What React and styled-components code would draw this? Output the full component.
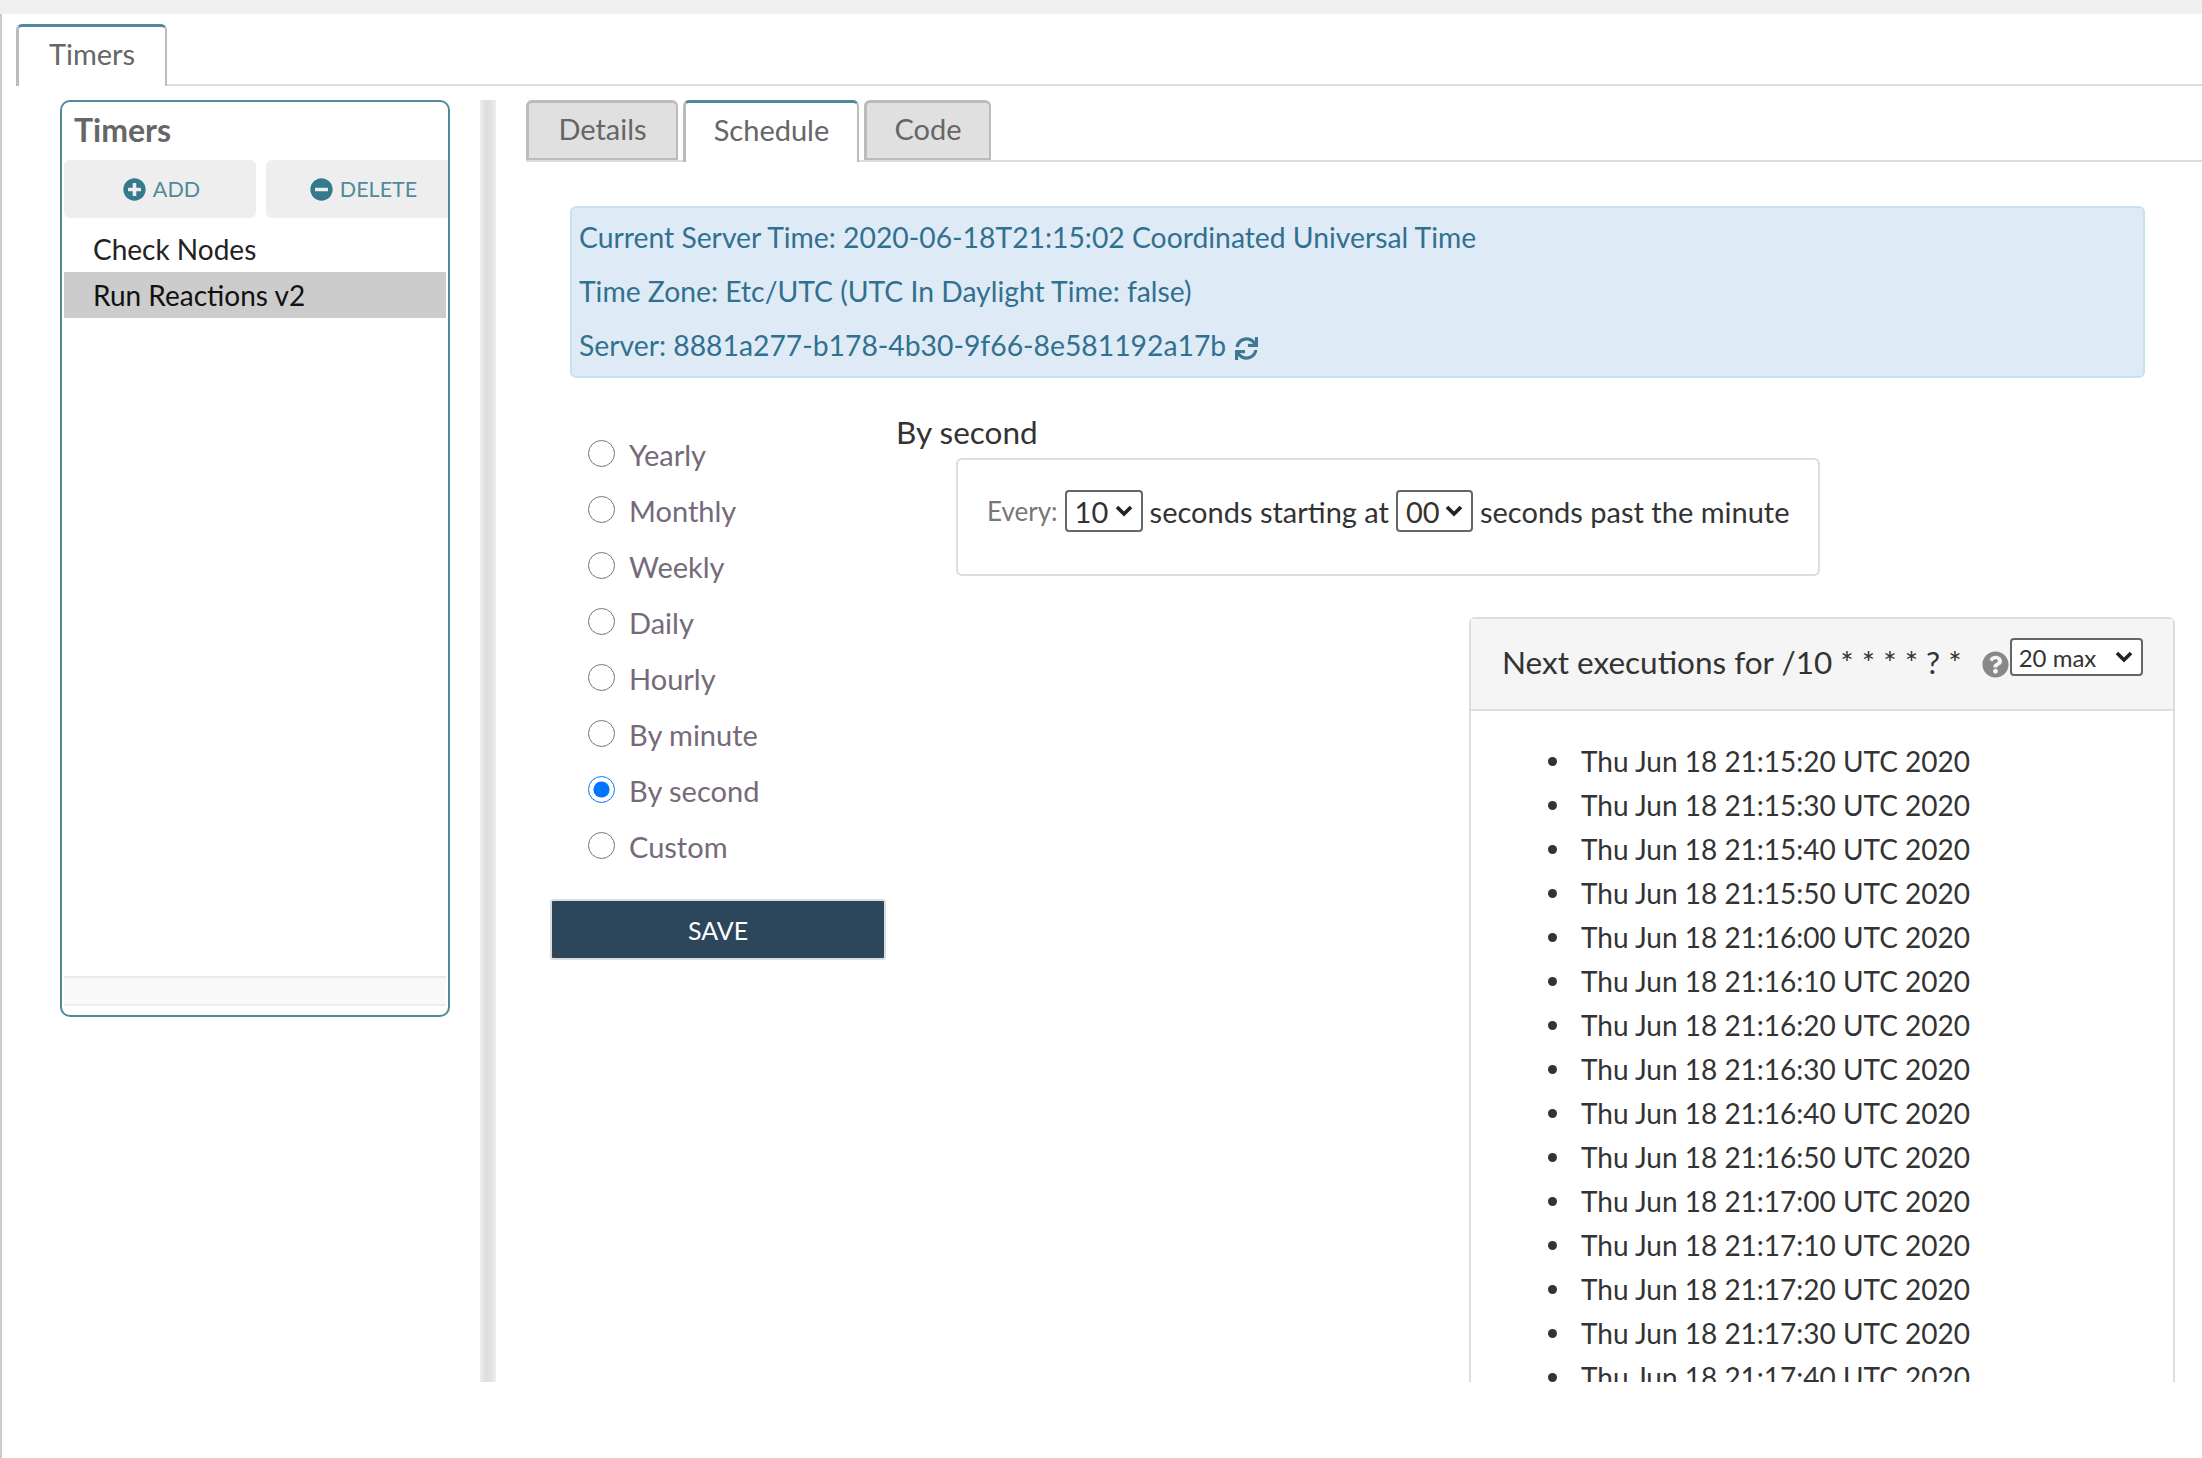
import React from 'react';
import styled, { createGlobalStyle } from 'styled-components';
import { FaPlusCircle, FaMinusCircle, FaQuestionCircle, FaSync } from 'react-icons/fa';

const TEAL = '#4f8a9c';

const CHEVRON = "url(\"data:image/svg+xml,%3Csvg xmlns='http://www.w3.org/2000/svg' viewBox='0 0 20 14'%3E%3Cpath d='M3 3l7 7 7-7' fill='none' stroke='%23222' stroke-width='3.6'/%3E%3C/svg%3E\")";

const GlobalStyle = createGlobalStyle`
  html, body {
    margin: 0;
    height: 100%;
    background: #fff;
    overflow: hidden;
  }
  body, select, button {
    font-family: Lato, "Noto Sans", sans-serif;
  }
  * {
    box-sizing: border-box;
  }
`;

const TopBand = styled.div`
  height: 14px;
  background: #f0f0f0;
`;

const Shell = styled.div`
  height: 1444px;
  padding: 10px 0 0 14px;
  border-left: 2px solid #ccc;
`;

const TabStrip = styled.div`
  display: flex;
  height: 62px;
  border-bottom: 2px solid #ddd;
`;

const Tab = styled.div`
  display: flex;
  align-items: center;
  justify-content: center;
  width: ${p => p.$width}px;
  height: ${p => p.$active ? '62px' : '60px'};
  padding-bottom: ${p => p.$active ? '6px' : '4px'};
  font-size: 29px;
  color: #666;
  background: ${p => p.$active ? '#fff' : '#e0e0e0'};
  border: 3px solid #bbb;
  border-top: 3px solid ${p => p.$active ? TEAL : '#bbb'};
  border-bottom: ${p => p.$active ? '0 none' : '2px solid #bbb'};
  border-right-width: 2px;
  border-radius: 6px 6px 0 0;
`;

const Workspace = styled.div`
  display: flex;
  height: 1296px;
  padding-top: 14px;
  overflow: hidden;
`;

const SidePanel = styled.div`
  display: flex;
  flex-direction: column;
  flex: 0 0 390px;
  min-width: 0;
  height: 917px;
  margin-left: 44px;
  padding: 2px;
  border: 2px solid ${TEAL};
  border-radius: 10px;
  background: #fff;
`;

const SideTitle = styled.div`
  height: 56px;
  padding: 7px 0 0 10px;
  font-size: 32px;
  font-weight: 700;
  line-height: 38px;
  color: #666;
`;

const ActionRow = styled.div`
  display: flex;
  gap: 10px;
  width: 384px;
`;

const ActionButton = styled.div`
  display: flex;
  flex: 0 0 ${p => p.$width}px;
  align-items: center;
  justify-content: center;
  gap: 7px;
  height: 58px;
  padding-left: ${p => p.$shift}px;
  font-size: 21.5px;
  color: ${TEAL};
  background: #eee;
  border-radius: ${p => p.$clipped ? '6px 0 0 6px' : '6px'};
  svg {
    width: 23px;
    height: 23px;
    color: #35798c;
  }
`;

const TimerList = styled.div`
  flex: 1;
  padding-top: 8px;
`;

const TimerRow = styled.div`
  height: 46px;
  padding-left: 29px;
  font-size: 28px;
  line-height: 46px;
  color: ${p => p.$selected ? '#111' : '#222'};
  background: ${p => p.$selected ? '#ccc' : 'transparent'};
`;

const SideFooter = styled.div`
  height: 30px;
  margin-bottom: 7px;
  background: #f9f9f9;
  border-top: 2px solid #eaeaea;
  border-bottom: 2px solid #eee;
`;

const Splitter = styled.div`
  flex: 0 0 16px;
  margin-left: 30px;
  background: linear-gradient(to right, #eee, #ddd 35%, #e2e2e2 70%, #eee);
`;

const Main = styled.div`
  flex: 1;
  min-width: 0;
  padding-left: 30px;
`;

const SubTabs = styled(TabStrip)`
  gap: 5px;
`;

const Pane = styled.div`
  padding: 44px 57px 0 44px;
`;

const InfoBox = styled.div`
  display: flex;
  flex-direction: column;
  justify-content: center;
  height: 172px;
  padding: 0 0 2px 7px;
  font-size: 28.3px;
  line-height: 54px;
  color: #31708f;
  background: #deebf6;
  border: 2px solid #c4e3ed;
  border-radius: 6px;
  svg {
    width: 23px;
    height: 23px;
    margin-left: 9px;
    vertical-align: -4px;
    color: #3d7891;
  }
`;

const ScheduleRow = styled.div`
  display: flex;
`;

const RadioColumn = styled.div`
  flex: 0 0 326px;
  padding-top: 48px;
`;

const RadioRow = styled.label`
  display: flex;
  align-items: center;
  gap: 14px;
  height: 56px;
  padding-left: 18px;
  font-size: 29px;
  color: #75697a;
  input {
    width: 27px;
    height: 27px;
    margin: -2px 0 0 0;
    flex: none;
  }
`;

const SaveButton = styled.button`
  display: block;
  width: 336px;
  height: 61px;
  margin: 25px 0 0 -20px;
  font-size: 25px;
  color: #fff;
  background: #2c465c;
  border: 2px solid #ddd;
  border-radius: 3px;
`;

const Detail = styled.div`
  flex: 1;
  min-width: 0;
`;

const DetailHeading = styled.div`
  height: 80px;
  padding-top: 34px;
  font-size: 31.5px;
  line-height: 40px;
  color: #333;
`;

const EveryBox = styled.div`
  display: flex;
  align-items: center;
  width: 864px;
  height: 118px;
  margin-left: 60px;
  padding: 0 0 12px 29px;
  font-size: 29px;
  color: #333;
  border: 2px solid #ddd;
  border-radius: 6px;
`;

const EveryLabel = styled.span`
  font-size: 26px;
  color: #777;
`;

const Picker = styled.select`
  appearance: none;
  width: ${p => p.$width}px;
  height: ${p => p.$height || 42}px;
  margin: 0 ${p => p.$gap ?? 7}px;
  padding: 0 0 0 ${p => p.$inset || 8}px;
  font-size: ${p => p.$size || 29}px;
  color: #333;
  background: #fff ${CHEVRON} no-repeat right 7px center / 20px 14px;
  border: 2px solid #666;
  border-radius: 4px;
`;

const ResultPanel = styled.div`
  width: 706px;
  margin: 41px 0 0 573px;
  border: 2px solid #ddd;
  border-bottom: 0 none;
  border-radius: 6px 6px 0 0;
`;

const ResultHeader = styled.div`
  display: flex;
  align-items: flex-start;
  height: 92px;
  padding: 19px 0 0 31px;
  font-size: 31.5px;
  line-height: 48px;
  color: #333;
  background: #f5f5f5;
  border-bottom: 2px solid #ddd;
`;

const HelpIcon = styled(FaQuestionCircle)`
  flex: none;
  width: 27px;
  height: 27px;
  margin: 13px 1px 0 20px;
  color: #888;
`;

const ResultList = styled.ul`
  margin: 0;
  padding: 28px 0 0 77px;
  list-style: none;
  font-size: 28px;
  line-height: 44px;
  color: #333;
`;

const ResultItem = styled.li`
  display: flex;
  align-items: center;
  gap: 24px;
  &::before {
    content: '';
    width: 9px;
    height: 9px;
    border-radius: 50%;
    background: #333;
  }
`;

const modes = ['Yearly', 'Monthly', 'Weekly', 'Daily', 'Hourly', 'By minute', 'By second', 'Custom'];

const runs = [
  '21:15:20', '21:15:30', '21:15:40', '21:15:50', '21:16:00', '21:16:10', '21:16:20', '21:16:30',
  '21:16:40', '21:16:50', '21:17:00', '21:17:10', '21:17:20', '21:17:30', '21:17:40',
];

export default function App() {
  return (
    <>
      <GlobalStyle />
      <TopBand />
      <Shell>
        <TabStrip>
          <Tab $active $width={151}>Timers</Tab>
        </TabStrip>
        <Workspace>
          <SidePanel>
            <SideTitle>Timers</SideTitle>
            <ActionRow>
              <ActionButton $width={192} $shift={3}><FaPlusCircle />ADD</ActionButton>
              <ActionButton $width={182} $shift={13} $clipped><FaMinusCircle />DELETE</ActionButton>
            </ActionRow>
            <TimerList>
              <TimerRow>Check Nodes</TimerRow>
              <TimerRow $selected>Run Reactions v2</TimerRow>
            </TimerList>
            <SideFooter />
          </SidePanel>
          <Splitter />
          <Main>
            <SubTabs>
              <Tab $width={152}>Details</Tab>
              <Tab $active $width={176}>Schedule</Tab>
              <Tab $width={127}>Code</Tab>
            </SubTabs>
            <Pane>
              <InfoBox>
                <div>Current Server Time: 2020-06-18T21:15:02 Coordinated Universal Time</div>
                <div>Time Zone: Etc/UTC (UTC In Daylight Time: false)</div>
                <div>Server: 8881a277-b178-4b30-9f66-8e581192a17b<FaSync /></div>
              </InfoBox>
              <ScheduleRow>
                <RadioColumn>
                  {modes.map(m => (
                    <RadioRow key={m}>
                      <input type="radio" name="mode" defaultChecked={m === 'By second'} />
                      {m}
                    </RadioRow>
                  ))}
                  <SaveButton>SAVE</SaveButton>
                </RadioColumn>
                <Detail>
                  <DetailHeading>By second</DetailHeading>
                  <EveryBox>
                    <EveryLabel>Every:</EveryLabel>
                    <Picker $width={78} defaultValue="10">
                      <option>10</option>
                    </Picker>
                    seconds starting at
                    <Picker $width={77} defaultValue="00">
                      <option>00</option>
                    </Picker>
                    seconds past the minute
                  </EveryBox>
                  <ResultPanel>
                    <ResultHeader>
                      Next executions for /10 * * * * ? *
                      <HelpIcon />
                      <Picker $width={133} $height={38} $size={24} $gap={0} $inset={7} defaultValue="20 max">
                        <option>20 max</option>
                      </Picker>
                    </ResultHeader>
                    <ResultList>
                      {runs.map(t => <ResultItem key={t}>Thu Jun 18 {t} UTC 2020</ResultItem>)}
                    </ResultList>
                  </ResultPanel>
                </Detail>
              </ScheduleRow>
            </Pane>
          </Main>
        </Workspace>
      </Shell>
    </>
  );
}
